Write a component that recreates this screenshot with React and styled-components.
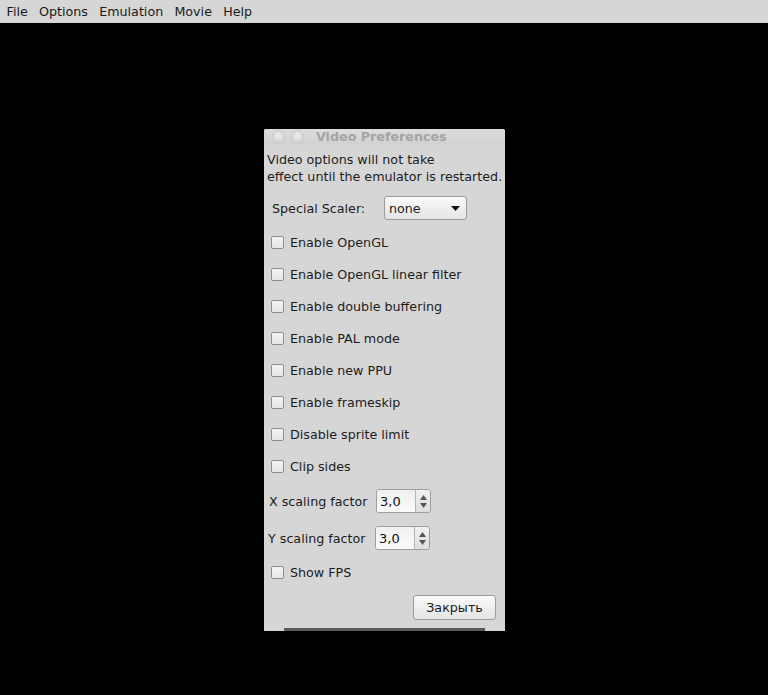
import React from "react";
import styled, { createGlobalStyle } from "styled-components";

const GlobalStyle = createGlobalStyle`
  html, body {
    margin: 0;
    padding: 0;
    background: #000;
  }
  body {
    font-family: "DejaVu Sans", "Liberation Sans", sans-serif;
    width: 768px;
    height: 695px;
    overflow: hidden;
  }
`;

const MENU_ITEMS = ["File", "Options", "Emulation", "Movie", "Help"];

const CHECKS = [
  "Enable OpenGL",
  "Enable OpenGL linear filter",
  "Enable double buffering",
  "Enable PAL mode",
  "Enable new PPU",
  "Enable frameskip",
  "Disable sprite limit",
  "Clip sides",
];

function App() {
  return (
    <>
      <GlobalStyle />
      <MenuBar>
        {MENU_ITEMS.map((item) => (
          <MenuItem key={item}>{item}</MenuItem>
        ))}
      </MenuBar>
      <Desktop>
        <Window>
          <TitleBar>
            <TitleButton />
            <TitleButton />
            <Title>Video Preferences</Title>
          </TitleBar>
          <Body>
            <Message>
              Video options will not take
              <br />
              effect until the emulator is restarted.
            </Message>
            <ScalerRow>
              <ScalerLabel>Special Scaler:</ScalerLabel>
              <Combo>
                <span>none</span>
                <ComboArrow viewBox="0 0 9 5">
                  <path d="M0 0h9L4.5 5z" fill="#111" />
                </ComboArrow>
              </Combo>
            </ScalerRow>
            {CHECKS.map((label) => (
              <CheckRow key={label}>
                <Box />
                <span>{label}</span>
              </CheckRow>
            ))}
            <SpinRow $top={7}>
              <SpinLabel>X scaling factor</SpinLabel>
              <Spinner value="3,0" />
            </SpinRow>
            <SpinRow $top={13} $shift={-1}>
              <SpinLabel>Y scaling factor</SpinLabel>
              <Spinner value="3,0" />
            </SpinRow>
            <CheckRow $top={6}>
              <Box />
              <span>Show FPS</span>
            </CheckRow>
            <Footer>
              <Button>Закрыть</Button>
            </Footer>
          </Body>
          <BottomEdge />
        </Window>
      </Desktop>
    </>
  );
}

function Spinner({ value }) {
  return (
    <SpinBox>
      <SpinField>{value}</SpinField>
      <SpinArrows>
        <svg width="7" height="5" viewBox="0 0 7 5">
          <path d="M3.5 0L7 5H0z" fill="#555" />
        </svg>
        <svg width="7" height="5" viewBox="0 0 7 5">
          <path d="M0 0h7L3.5 5z" fill="#555" />
        </svg>
      </SpinArrows>
    </SpinBox>
  );
}

const MenuBar = styled.div`
  height: 23px;
  background: #d6d6d6;
  display: flex;
  align-items: center;
  padding-left: 1px;
  font-size: 12.7px;
  color: #1a1a1a;
`;

const MenuItem = styled.div`
  padding: 0 5.6px;
`;

const Desktop = styled.div`
  padding: 106px 0 0 264px;
`;

const Window = styled.div`
  width: 241px;
  height: 502px;
  background: #d6d6d6;
  display: flex;
  flex-direction: column;
  font-size: 12.7px;
  color: #1c1c1c;
  border-radius: 2px 2px 0 0;
  overflow: hidden;
`;

const TitleBar = styled.div`
  height: 15px;
  display: flex;
  align-items: center;
  padding-left: 8px;
  gap: 6px;
  background: linear-gradient(#dcdcdc, #d2d2d2);
`;

const TitleButton = styled.div`
  width: 11px;
  height: 11px;
  border-radius: 50%;
  background: radial-gradient(circle at 50% 40%, #ececec, #cfcfcf);
  border: 1px solid #c4c4c4;
`;

const Title = styled.div`
  margin-left: 6px;
  font-weight: bold;
  font-size: 12.7px;
  color: #a4a4a4;
`;

const Body = styled.div`
  flex: 1;
  display: flex;
  flex-direction: column;
  padding: 7px 0 0 3px;
`;

const Message = styled.div`
  line-height: 17px;
  white-space: nowrap;
`;

const ScalerRow = styled.div`
  display: flex;
  align-items: center;
  height: 24px;
  margin-top: 11px;
  margin-bottom: 6px;
  padding-left: 5px;
`;

const ScalerLabel = styled.span`
  width: 112px;
`;

const Combo = styled.div`
  width: 83px;
  height: 24px;
  box-sizing: border-box;
  border: 1px solid #9a9a9a;
  border-radius: 3px;
  background: linear-gradient(#fafafa, #e4e4e4);
  display: flex;
  align-items: center;
  justify-content: space-between;
  padding: 0 6px 0 4px;
`;

const ComboArrow = styled.svg`
  width: 9px;
  height: 5px;
`;

const CheckRow = styled.div`
  display: flex;
  align-items: center;
  height: 32px;
  margin-top: ${(p) => p.$top || 0}px;
  padding-left: 4px;
  gap: 6px;
`;

const Box = styled.div`
  width: 11px;
  height: 11px;
  border: 1px solid #8e8e8e;
  border-radius: 2px;
  background: linear-gradient(#f4f4f4, #e6e6e6);
`;

const SpinRow = styled.div`
  display: flex;
  align-items: center;
  height: 24px;
  margin-top: ${(p) => p.$top}px;
  padding-left: 2px;
  margin-left: ${(p) => p.$shift || 0}px;
  gap: 8px;
`;

const SpinLabel = styled.span`
  width: 100px;
  white-space: nowrap;
`;

const SpinBox = styled.div`
  width: 55px;
  height: 24px;
  box-sizing: border-box;
  border: 1px solid #9e9e9e;
  border-radius: 3px;
  display: flex;
  overflow: hidden;
  margin-left: -1px;
`;

const SpinField = styled.div`
  flex: 1;
  background: linear-gradient(#f0f0f0, #fafafa);
  display: flex;
  align-items: center;
  padding-left: 3px;
  font-size: 13px;
  color: #111;
`;

const SpinArrows = styled.div`
  width: 14px;
  border-left: 1px solid #b4b4b4;
  background: linear-gradient(#f2f2f2, #dedede);
  display: flex;
  flex-direction: column;
  align-items: center;
  justify-content: center;
  gap: 3px;
`;

const Footer = styled.div`
  display: flex;
  justify-content: flex-end;
  padding-right: 9px;
  margin-top: 7px;
`;

const Button = styled.button`
  width: 83px;
  height: 25px;
  border: 1px solid #9c9c9c;
  border-radius: 3px;
  background: linear-gradient(#fbfbfb, #e3e3e3);
  font-family: inherit;
  font-size: 12.7px;
  color: #1c1c1c;
  padding: 0;
`;

const BottomEdge = styled.div`
  height: 3px;
  margin: 0 20px;
  background: #5a5a5a;
`;

export default App;
